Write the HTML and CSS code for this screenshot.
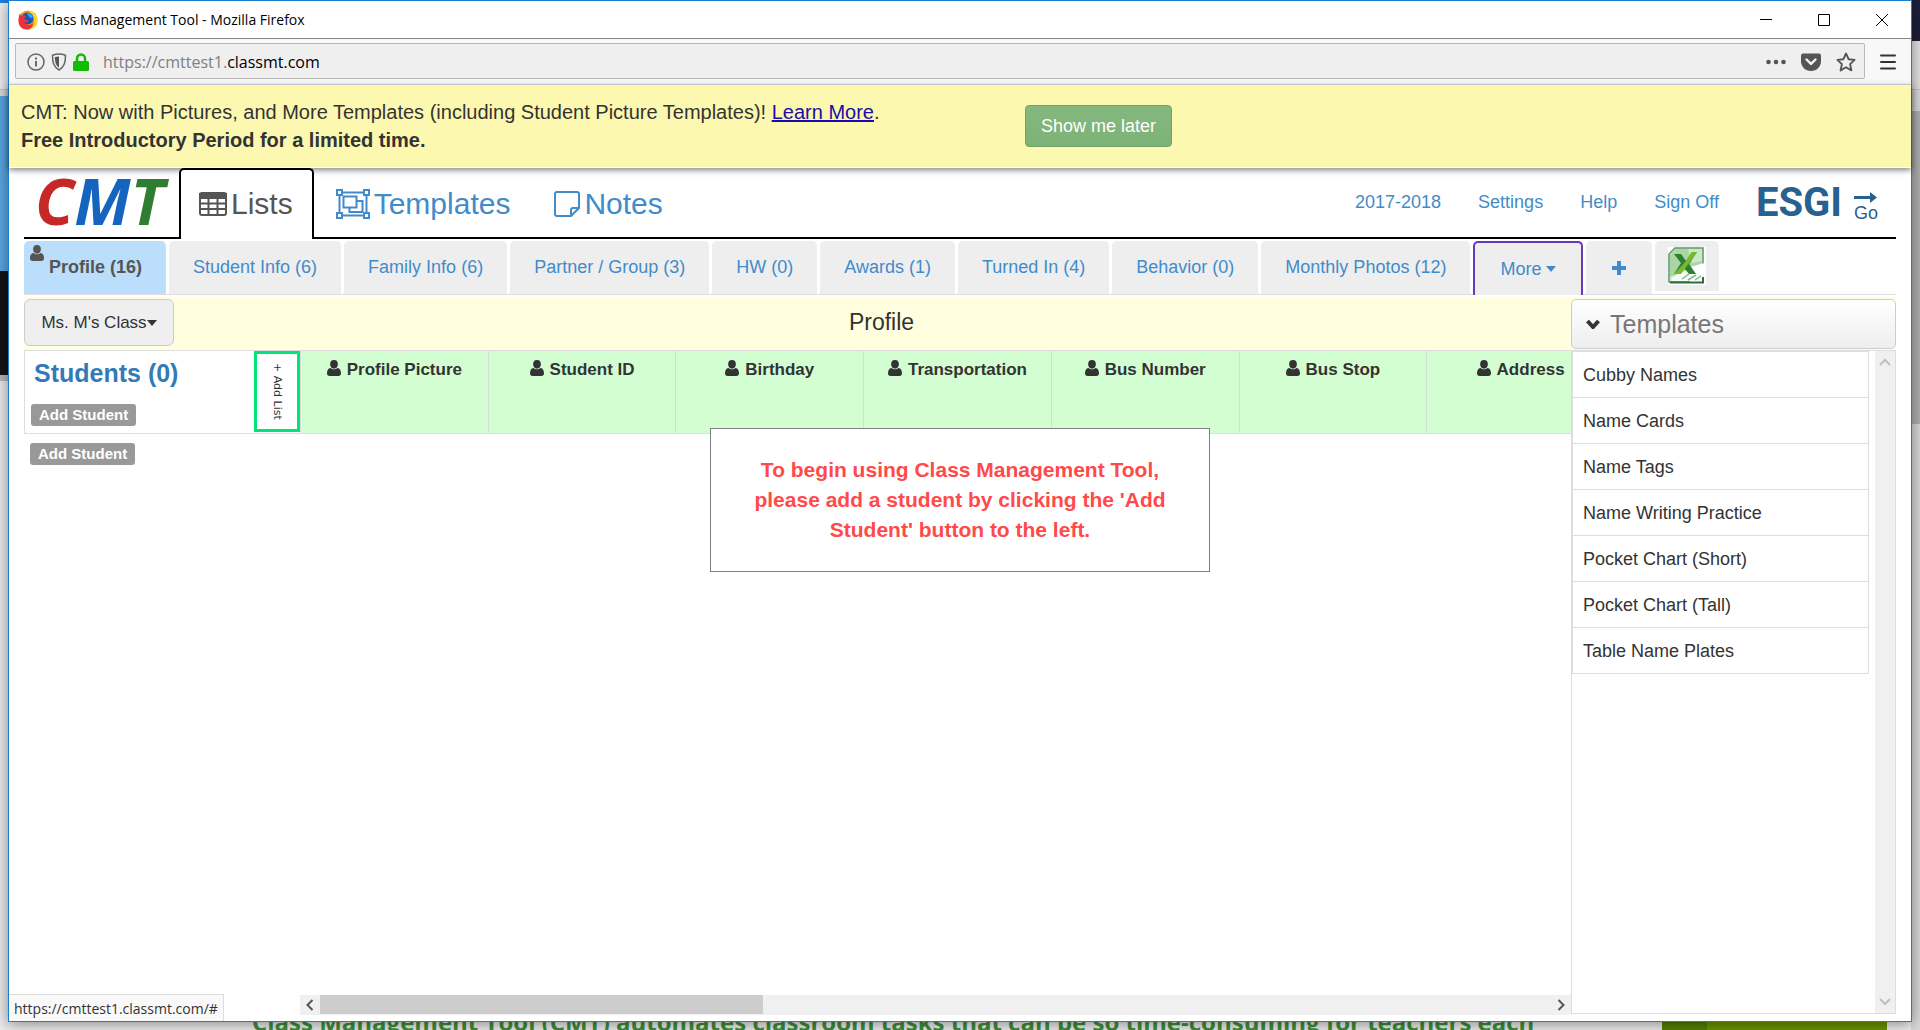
FILE: index.html
```html
<!DOCTYPE html>
<html lang="en">
<head>
<meta charset="utf-8">
<title>Class Management Tool</title>
<link rel="stylesheet" href="styles.css">
</head>
<body>
<svg class="defs" width="0" height="0" aria-hidden="true">
  <symbol id="user" viewBox="0 0 14 16"><path d="M7 0a3.9 4.3 0 0 1 3.9 4.3C10.900 7 9.200 8.700 7 8.700S3.100 7 3.100 4.300A3.900 4.300 0 0 1 7 0zM3.500 7.900c1 .9 2.200 1.400 3.500 1.400s2.500-.5 3.500-1.400C13 8.200 14 10.500 14 13.200 14 15 13 16 11.500 16h-9C1 16 0 15 0 13.200 0 10.500 1 8.200 3.500 7.900z"/></symbol>
</svg>
<div class="backdrop" aria-hidden="true">
  <div class="edge edge-left"></div>
  <div class="edge edge-right"></div>
  <p class="behind-text">Class Management Tool (CMT) automates classroom tasks that can be so time-consuming for teachers each</p>
  <div class="behind-block"></div>
</div>

<div class="window">
  <header class="titlebar">
    <svg class="firefox" viewBox="0 0 20 20"><circle cx="10" cy="10" r="9.500" fill="#ff9500"/><path d="M10 .5C15 .5 19.500 5 19.500 10c0 5-4 9.500-9.500 9.500 5-2 7-5.500 6-10C15.500 6 13 3 10 .5z" fill="#ffd23a"/><circle cx="9.500" cy="8.500" r="6" fill="#1d55b5"/><path d="M9 3c4 0 6 2.500 5.500 5.500L11 7z" fill="#24b2f2"/><path d="M2 3c0 2 .5 2.500 1.500 2.500C5 5 7 5 8 6.500c0 1-2 1.500-2 2.500 1 1 3 .5 4.500 1.500C10 13 7 13 6 12c2 4 7 3.500 9 1 0 4-3 6.500-6 6.500C4 19.500.5 16 .5 11 .5 8 1 5 2 3z" fill="#f0303c"/></svg>
    <h1 class="window-title">Class Management Tool - Mozilla Firefox</h1>
    <div class="window-controls">
      <button aria-label="Minimize"><svg viewBox="0 0 14 14"><path d="M1 6.500h12" /></svg></button>
      <button aria-label="Maximize"><svg viewBox="0 0 14 14"><path d="M1.500 1.500h11v11h-11z"/></svg></button>
      <button aria-label="Close"><svg viewBox="0 0 14 14"><path d="M1 1l12 12M13 1L1 13"/></svg></button>
    </div>
  </header>

  <div class="toolbar">
    <div class="urlbar">
      <svg class="ic18" viewBox="0 0 18 18"><circle cx="9" cy="9" r="8" fill="none" stroke="#666" stroke-width="1.500"/><path d="M8 8h2v5.500H8zM8 4.500h2v2H8z" fill="#666"/></svg>
      <svg class="shield" viewBox="0 0 16 18"><path d="M8 1c2.500 0 4.500.5 6.500 1.200 0 7-1 11.800-6.500 14.800C2.500 14 1.500 9.200 1.500 2.200 3.500 1.500 5.500 1 8 1z" fill="none" stroke="#666" stroke-width="1.500"/><path d="M8 3.500c-1.500 0-3 .3-4.200.7.200 4.800 1 8.300 4.200 10.300z" fill="#555"/></svg>
      <svg class="lock" viewBox="0 0 16 18"><path d="M4 9V5.500a4 4 0 0 1 8 0V9" fill="none" stroke="#12bc00" stroke-width="2.500"/><rect x="0" y="8" width="16" height="10" rx="1.500" fill="#12bc00"/></svg>
      <p class="url">https://cmttest1.<b>classmt.com</b></p>
      <div class="url-actions">
        <svg class="ic20" viewBox="0 0 20 20"><g fill="#555"><circle cx="2.500" cy="10" r="2.300"/><circle cx="10" cy="10" r="2.300"/><circle cx="17.500" cy="10" r="2.300"/></g></svg>
        <svg class="ic20" viewBox="0 0 20 20"><path d="M2 1.500h16q2 0 2 2V9c0 6-4.500 10-10 10S0 15 0 9V3.500q0-2 2-2z" fill="#555"/><path d="M5.500 7.500l4.500 4.300 4.500-4.300" fill="none" stroke="#f4f4f4" stroke-width="2.400" stroke-linecap="round" stroke-linejoin="round"/></svg>
        <svg class="ic20" viewBox="0 0 20 20"><path d="M10 1.500l2.600 5.700 6 .7-4.500 4.200 1.300 6.300-5.400-3.200-5.400 3.200 1.300-6.300L1.400 7.900l6-.7z" fill="none" stroke="#555" stroke-width="1.900" stroke-linejoin="round"/></svg>
      </div>
    </div>
    <button class="menu-button" aria-label="Menu"><svg viewBox="0 0 16 16"><path d="M1 1.500h14M1 8h14M1 14.500h14" stroke="#333" stroke-width="2" stroke-linecap="round"/></svg></button>
  </div>

  <div class="banner">
    <p class="banner-text">CMT: Now with Pictures, and More Templates (including Student Picture Templates)! <a href="#">Learn More</a>.<br><strong>Free Introductory Period for a limited time.</strong></p>
    <button class="later">Show me later</button>
  </div>

  <main class="app">
    <nav class="main-nav">
      <a class="logo" href="#"><span class="logo-c">C</span><span class="logo-m">M</span><span class="logo-t">T</span></a>
      <a class="nav-tab active" href="#"><svg class="ic-table" viewBox="0 0 28 24"><rect x="1" y="1" width="26" height="22" rx="2" fill="none" stroke="currentColor" stroke-width="2"/><path d="M1 2h26v4H1zM1 11.500h26M1 17h26M9.500 5v18M18.500 5v18" fill="currentColor" stroke="currentColor" stroke-width="2"/></svg>Lists</a>
      <a class="nav-tab" href="#"><svg class="ic-group" viewBox="0 0 34 30"><g fill="none" stroke="currentColor" stroke-width="2"><path d="M6 3.500h22M6 26.500h22M3.500 6v18M30.500 6v18M1 1h5v5H1zM28 1h5v5h-5zM1 24h5v5H1zM28 24h5v5h-5z"/><path d="M7.500 7.500h13v11h-13zM20.500 12h6v11h-13v-4.500"/></g></svg>Templates</a>
      <a class="nav-tab" href="#"><svg class="ic-note" viewBox="0 0 26 26"><path d="M3 1h20q2 0 2 2v14l-8 8H3q-2 0-2-2V3q0-2 2-2zM17 25v-6q0-2 2-2h6" fill="none" stroke="currentColor" stroke-width="2"/></svg>Notes</a>
      <div class="account">
        <a href="#">2017-2018</a><a href="#">Settings</a><a href="#">Help</a><a href="#">Sign Off</a>
        <a class="esgi" href="#"><span class="esgi-name">ESGI</span><span class="esgi-go"><svg viewBox="0 0 23 11"><path d="M0 4h16V0l7 5.500-7 5.500V7H0z" fill="#286090"/></svg>Go</span></a>
      </div>
    </nav>

    <nav class="sub-nav">
      <a class="sub profile" href="#"><svg class="user"><use href="#user"/></svg>Profile (16)</a>
      <a class="sub" href="#">Student Info (6)</a>
      <a class="sub" href="#">Family Info (6)</a>
      <a class="sub" href="#">Partner / Group (3)</a>
      <a class="sub" href="#">HW (0)</a>
      <a class="sub" href="#">Awards (1)</a>
      <a class="sub" href="#">Turned In (4)</a>
      <a class="sub" href="#">Behavior (0)</a>
      <a class="sub" href="#">Monthly Photos (12)</a>
      <a class="sub more" href="#">More<i class="caret"></i></a>
      <a class="sub plus" href="#" aria-label="Add"><svg viewBox="0 0 14 14"><path d="M5 0h4v5h5v4H9v5H5V9H0V5h5z" fill="#428bca"/></svg></a>
      <a class="sub excel" href="#" aria-label="Export to Excel"><svg viewBox="0 0 38 38"><rect width="38" height="38" fill="#fff"/><path d="M7 1h28v34H1V7z" fill="#dcefd8" stroke="#5f9469" stroke-width="1.500"/><path d="M8 2h26v14L22 22 2 30V8z" fill="#a8d6a4"/><path d="M20 2h14v12l-10 2z" fill="#c9e8c4"/><path d="M22 20l15-4v19H22z" fill="#fff"/><path d="M4 31l16-9 16 6v6H4z" fill="#f8fcf6"/><path d="M6 7h7l5 7 6-9h5l-8 12 7 10h-7l-5-6-5 6H6l7-11z" fill="#2e7d32"/><path d="M18 14l6-9h5L13 27H6z" fill="#7bb928"/><path d="M14 32l7-5M20 33l8-5M27 33l6-4" stroke="#86b98a" stroke-width="1.500"/><path d="M2 35.500h33V30" fill="none" stroke="#2f6b46" stroke-width="2"/></svg></a>
    </nav>

    <div class="heading">
      <button class="class-picker">Ms. M's Class<i class="caret"></i></button>
      <h2 class="list-name">Profile</h2>
      <button class="panel-toggle"><svg viewBox="0 0 14 10"><path d="M1.500 2L7 8l5.500-6" fill="none" stroke="#333" stroke-width="4"/></svg>Templates</button>
    </div>

    <div class="content">
      <section class="lists">
        <div class="grid">
          <div class="students-head">
            <div class="students">
              <h3>Students (0)</h3>
              <button class="pill">Add Student</button>
            </div>
            <button class="add-list"><span>+ Add List</span></button>
          </div>
          <div class="columns">
            <table>
              <thead><tr>
                <th><svg class="user"><use href="#user"/></svg>Profile Picture</th>
                <th><svg class="user"><use href="#user"/></svg>Student ID</th>
                <th><svg class="user"><use href="#user"/></svg>Birthday</th>
                <th><svg class="user"><use href="#user"/></svg>Transportation</th>
                <th><svg class="user"><use href="#user"/></svg>Bus Number</th>
                <th><svg class="user"><use href="#user"/></svg>Bus Stop</th>
                <th><svg class="user"><use href="#user"/></svg>Address</th>
              </tr></thead>
            </table>
          </div>
        </div>
        <button class="pill pill-below">Add Student</button>
        <div class="hscroll">
          <svg viewBox="0 0 8 12"><path d="M6.500 1l-5 5 5 5"/></svg>
          <div class="track"><div class="thumb"></div></div>
          <svg viewBox="0 0 8 12"><path d="M1.500 1l5 5-5 5"/></svg>
        </div>
      </section>
      <aside class="panel">
        <ul>
          <li><a href="#">Cubby Names</a></li>
          <li><a href="#">Name Cards</a></li>
          <li><a href="#">Name Tags</a></li>
          <li><a href="#">Name Writing Practice</a></li>
          <li><a href="#">Pocket Chart (Short)</a></li>
          <li><a href="#">Pocket Chart (Tall)</a></li>
          <li><a href="#">Table Name Plates</a></li>
        </ul>
        <div class="vscroll">
          <svg viewBox="0 0 12 8"><path d="M1 7l5-5 5 5"/></svg>
          <svg viewBox="0 0 12 8"><path d="M1 1l5 5 5-5"/></svg>
        </div>
      </aside>
    </div>
  </main>

  <div class="notice" role="dialog">To begin using Class Management Tool, please add a student by clicking the 'Add Student' button to the left.</div>
  <div class="status">https://cmttest1.classmt.com/#</div>
</div>
</body>
</html>
```
FILE: styles.css
```css
* { box-sizing: border-box; }
body {
  margin: 0;
  height: 100vh;
  overflow: hidden;
  display: flex;
  background: #efefef;
  font-family: "Liberation Sans", Arial, sans-serif;
  font-size: 18px;
  color: #333;
}
h1, h2, h3, p, ul { margin: 0; padding: 0; }
ul { list-style: none; }
a { color: #428bca; text-decoration: none; }
button { font: inherit; color: inherit; border: 0; background: none; padding: 0; }
svg { flex: none; }
.defs { position: absolute; }

/* Desktop behind the window */
.backdrop { position: absolute; inset: 0; overflow: hidden; }
.edge { position: absolute; top: 0; bottom: 0; width: 9px; }
.edge-left {
  left: 0;
  background: linear-gradient(#1a82e6 0 3px, #efefef 3px 89px, #c8c8c8 89px 90px, #dcdcdc 90px 96px, #5ba7e5 96px 271px, #141414 271px 375px, #b8b8b8 375px 381px, #ebebeb 381px);
}
.edge-right {
  right: 0;
  background: linear-gradient(#1f1f3d 0 41px, #e4e4e4 41px 89px, #c4c4c4 89px 90px, #dadada 90px 111px, #b0b0b0 111px 424px, #dadada 424px);
}
.behind-text {
  position: absolute;
  left: 252px;
  bottom: -8px;
  font: 700 24px/32px "Open Sans", sans-serif;
  color: #3f8f3a;
  white-space: nowrap;
}
.behind-block {
  position: absolute;
  right: 33px;
  bottom: 0;
  width: 225px;
  height: 10px;
  background: linear-gradient(90deg, #578200 45px, #6c9600 45px);
}

/* Browser window */
.window {
  position: relative;
  flex: 1;
  min-width: 0;
  display: flex;
  flex-direction: column;
  margin: 0 8px 8px 8px;
  border: 1px solid #1a7fd4;
  background: #fff;
  box-shadow: 0 2px 14px rgba(0, 0, 0, .45);
}
.titlebar {
  display: flex;
  align-items: center;
  height: 38px;
  padding-left: 9px;
  border-bottom: 1px solid #868686;
}
.firefox { width: 20px; height: 20px; }
.window-title { margin-left: 5px; font: 400 14px/20px "Open Sans", sans-serif; color: #000; }
.window-controls { display: flex; margin-left: auto; }
.window-controls button { width: 58px; height: 36px; }
.window-controls svg { width: 14px; height: 14px; fill: none; stroke: #000; vertical-align: middle; }
.toolbar {
  display: flex;
  height: 46px;
  padding: 4px 0 5px 6px;
  background: #f8f8f8;
  border-bottom: 1px solid #dcdcdc;
}
.urlbar {
  flex: 1;
  display: flex;
  align-items: center;
  padding: 2px 8px 0 11px;
  border: 1px solid #b8b8b8;
  border-radius: 2px;
  background: #efefef;
}
.ic18 { width: 18px; height: 18px; }
.ic20 { width: 20px; height: 20px; }
.shield { width: 16px; height: 18px; margin-left: 6px; }
.lock { width: 16px; height: 18px; margin-left: 6px; }
.url { margin-left: 14px; font: 400 16px/22px "Open Sans", sans-serif; color: #808080; }
.url b { font-weight: 400; color: #000; }
.url-actions { display: flex; gap: 15px; margin-left: auto; }
.menu-button { width: 46px; }
.menu-button svg { width: 16px; height: 16px; vertical-align: middle; }

.banner {
  position: relative;
  z-index: 1;
  display: grid;
  grid-template-columns: 1016fr 886fr;
  align-items: center;
  justify-items: start;
  height: 83px;
  background: #fcf8af;
  border-bottom: 1px solid #fff;
  box-shadow: 0 2px 6px rgba(0, 0, 0, .5);
}
.banner-text { padding-left: 12px; font-size: 20px; line-height: 28px; }
.banner-text a { color: #1a0dab; text-decoration: underline; }
.later {
  height: 42px;
  padding: 0 15px;
  border: 1px solid #6fa56a;
  border-radius: 4px;
  background: linear-gradient(#85b87e, #7db277);
  color: #fff;
}

.app { flex: 1; display: flex; flex-direction: column; padding: 0 15px 6px; min-height: 0; }

/* Main navigation */
.main-nav { display: flex; height: 71px; border-bottom: 2px solid #000; }
.logo { display: flex; width: 155px; padding-left: 11px; font: italic 700 64px/66px "Open Sans", sans-serif; }
.logo-c { color: #c62828; }
.logo-m { color: #1565c0; }
.logo-t { color: #2e7d32; }
.nav-tab {
  display: flex;
  align-items: center;
  height: 71px;
  padding: 0 20px 2px 20px;
  border: 2px solid transparent;
  border-bottom: 0;
  font-size: 30px;
}
.nav-tab.active { position: relative; z-index: 1; padding: 0 19px 2px 18px; background: #fff; border-color: #000; border-radius: 5px 5px 0 0; color: #555; }
.ic-table { width: 28px; height: 24px; margin-right: 4px; }
.ic-group { width: 34px; height: 30px; margin-right: 4px; }
.ic-note { width: 26px; height: 26px; margin-right: 4px; }
.account { display: flex; align-items: center; gap: 37px; margin-left: auto; }
.esgi { display: flex; gap: 12px; padding-right: 18px; color: #286090; }
.esgi-name { font: 700 40px/40px Roboto, sans-serif; }
.esgi-go { display: flex; flex-direction: column; justify-content: flex-end; line-height: 20px; }
.esgi-go svg { width: 23px; height: 11px; }

/* List tabs */
.sub-nav { display: flex; align-items: flex-start; gap: 3px; height: 56px; padding-top: 2px; border-bottom: 1px solid #ddd; }
.sub {
  display: flex;
  align-items: center;
  justify-content: center;
  height: 53px;
  padding: 0 24px;
  border-radius: 5px 5px 0 0;
  background: #eee;
  white-space: nowrap;
}
.sub.profile { position: relative; padding: 0 23px 0 25px; background: #badefb; color: #555; font-weight: 700; border-right: 1px solid #ddd; }
.sub.profile .user { position: absolute; left: 6px; top: 4px; }
.user { width: 14px; height: 16px; fill: currentColor; }
.caret { border: 5px solid transparent; border-top: 6px solid currentColor; border-bottom: 0; }
.sub.more { height: 54px; padding: 0 25px; border: 2px solid #673ab7; border-bottom: 0; }
.sub.more .caret { margin-left: 5px; }
.sub.plus { padding: 0 26px; }
.sub.plus svg { width: 14px; height: 14px; }
.sub.excel { height: 50px; padding: 0 13px; }
.sub.excel svg { width: 38px; height: 38px; }

/* Heading row */
.heading {
  display: grid;
  grid-template-columns: 150px 1fr 325px;
  margin-top: 2px;
  height: 54px;
  padding-top: 2px;
  background: #ffffe0;
  border-bottom: 1px solid #ddd;
}
.class-picker { display: flex; align-items: center; justify-content: center; height: 47px; border: 1px solid #ccc; border-radius: 6px; background: #efefef; font-size: 17px; }
.list-name { justify-self: center; padding-left: 18px; font-weight: 400; font-size: 23px; line-height: 46px; }
.panel-toggle {
  display: flex;
  align-items: center;
  gap: 10px;
  height: 50px;
  padding-left: 14px;
  border: 1px solid #ccc;
  border-radius: 5px;
  background: linear-gradient(#fff, #eee);
  color: #777;
  font-size: 25px;
}
.panel-toggle svg { width: 14px; height: 10px; }

.content { flex: 1; display: flex; min-height: 0; }
.lists { flex: 1; min-width: 0; display: flex; flex-direction: column; align-items: flex-start; }
.grid { display: flex; align-self: stretch; height: 83px; border: 1px solid #ddd; border-width: 0 0 1px 1px; }
.students-head { display: flex; width: 275px; flex: none; }
.students { flex: 1; display: flex; flex-direction: column; align-items: flex-start; justify-content: space-between; padding: 6px 0 7px 6px; }
.students h3 { padding-left: 3px; font-size: 25px; line-height: 32px; color: #337ab7; }
.pill { height: 22px; padding: 0 8px; border-radius: 3px; background: #999; color: #fff; font-weight: 700; font-size: 15px; line-height: 22px; }
.pill-below { margin: 9px 0 0 6px; }
.add-list { display: flex; align-items: center; justify-content: center; width: 46px; height: 81px; border: 3px solid #00e676; font: 11px/14px "DejaVu Sans", sans-serif; }
.add-list span { writing-mode: vertical-rl; }
.columns { flex: 1; min-width: 0; overflow: hidden; background: #d2fed2; }
.columns table { table-layout: fixed; width: 1314px; height: 82px; border-collapse: separate; border-spacing: 0; }
.columns th { padding: 8px 0 0; border-left: 1px solid #d8dcd8; vertical-align: top; font-size: 17px; line-height: 22px; white-space: nowrap; }
.columns .user { margin-right: 6px; vertical-align: -1px; }

.hscroll { display: flex; align-items: center; align-self: stretch; height: 20px; margin: auto 0 0 276px; background: #f0f0f0; }
.hscroll svg { width: 8px; height: 12px; margin: 0 6px; }
.hscroll path, .vscroll path { fill: none; stroke: #555; stroke-width: 2; }
.track { flex: 1; height: 20px; }
.thumb { width: 36%; height: 19px; background: #cdcdcd; }

/* Template panel */
.panel { display: flex; justify-content: space-between; width: 325px; margin-bottom: 1px; border: 1px solid #ddd; border-top: 0; }
.panel ul { width: 297px; border: 1px solid #ddd; border-bottom: 0; align-self: flex-start; }
.panel li { height: 46px; border-bottom: 1px solid #ddd; }
.panel li a { display: block; padding-left: 10px; line-height: 46px; color: #333; }
.vscroll { display: flex; flex-direction: column; justify-content: space-between; align-items: center; width: 20px; padding: 7px 0; background: #f0f0f0; }
.vscroll svg { width: 12px; height: 8px; }
.vscroll path { stroke: #bfbfbf; }

/* Overlays */
.notice {
  position: absolute;
  z-index: 2;
  top: 427px;
  left: 50%;
  width: 500px;
  margin-left: -250px;
  padding: 26px 38px;
  border: 1px solid #808080;
  background: #fff;
  color: #ff4a4a;
  font-size: 21px;
  font-weight: 700;
  line-height: 30px;
  text-align: center;
}
.status {
  position: absolute;
  left: 0;
  bottom: 0;
  padding: 3px 5px 1px;
  border: 1px solid #ddd;
  border-width: 1px 1px 0 0;
  background: #f9f9f9;
  font: 14px/22px "Open Sans", sans-serif;
}
```
